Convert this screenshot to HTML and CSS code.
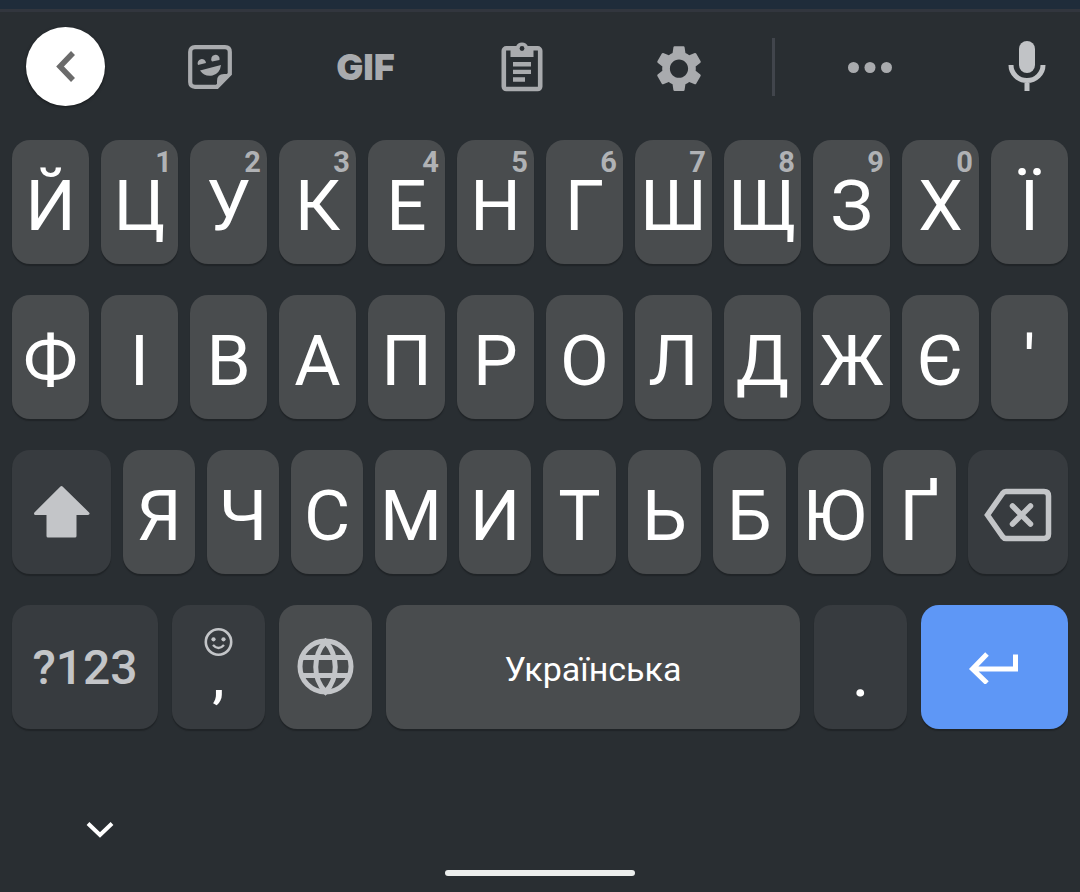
FILE: index.html
```html
<!DOCTYPE html>
<html lang="uk">
<head>
<meta charset="utf-8">
<meta name="viewport" content="width=device-width, initial-scale=1">
<title>Українська клавіатура</title>
<link rel="stylesheet" href="styles.css">
</head>
<body>
<main class="keyboard">
  <div class="toolbar">
    <button class="tool tool-back" aria-label="Назад"><span class="disc"><svg width="80" height="80" viewBox="0 0 80 80"><path d="M47 26 34 39.500 47 53" fill="none" stroke="#6b6b6b" stroke-width="5.500"/></svg></span></button>
    <button class="tool" aria-label="Стікери"><svg width="44" height="44" viewBox="0 0 44 44"><path d="M7 2.200H37Q41.800 2.200 41.800 7V29L29 41.800H7Q2.200 41.800 2.200 37V7Q2.200 2.200 7 2.200Z" fill="none" stroke="#a9abae" stroke-width="4.200"/><path d="M42.500 29 29 42.500V36Q29 29 36 29Z" fill="#a9abae"/><path d="M10 20a4.200 4.200 0 1 1 8-2ZM24 16.500a4.200 4.200 0 1 1 7.500-1.500ZM12 25.500 33 20Q32 28.500 24.500 30.500 16.500 32 12 25.500Z" fill="#a9abae"/></svg></button>
    <button class="tool gif">GIF</button>
    <button class="tool" aria-label="Буфер обміну"><svg width="42" height="50" viewBox="0 0 42 50"><rect x="2.800" y="6.300" width="36.400" height="40.700" rx="2.500" fill="none" stroke="#a9abae" stroke-width="4.600"/><path d="M9.500 4.500H15a6.500 6.500 0 0 1 12 0H32.500V15H9.500Z" fill="#a9abae"/><circle cx="21" cy="6.500" r="2.400" fill="#292e32"/><path d="M12 20H30V24.500H12ZM12 27.700H30V32H12ZM12 35.200H24V39.700H12Z" fill="#a9abae"/></svg></button>
    <button class="tool" aria-label="Налаштування"><svg width="56" height="56" viewBox="0 0 24 24"><path transform="translate(0 .7)" fill="#a9abae" d="M19.140 12.940c.040-.300.060-.610.060-.940 0-.320-.020-.640-.070-.940l2.030-1.580c.180-.140.230-.410.120-.610l-1.920-3.320c-.120-.220-.370-.290-.590-.220l-2.390.960c-.500-.380-1.030-.700-1.620-.940l-.360-2.540c-.040-.240-.240-.410-.480-.410h-3.840c-.240 0-.430.170-.470.410l-.360 2.540c-.590.240-1.130.570-1.620.940l-2.390-.960c-.220-.080-.470 0-.590.220L2.740 8.870c-.120.210-.080.470.120.610l2.030 1.580c-.050.300-.090.630-.090.940s.020.640.070.940l-2.030 1.580c-.180.140-.230.410-.120.610l1.920 3.320c.120.220.370.290.590.220l2.390-.960c.500.380 1.030.700 1.620.940l.360 2.540c.050.240.240.410.480.410h3.840c.240 0 .440-.170.470-.410l.360-2.540c.590-.240 1.130-.560 1.620-.940l2.390.960c.220.080.470 0 .590-.220l1.920-3.320c.120-.220.070-.470-.120-.610l-2.010-1.580zM12 15.900c-2.150 0-3.900-1.750-3.900-3.900s1.750-3.900 3.900-3.900 3.900 1.750 3.900 3.900-1.750 3.900-3.900 3.900z"/></svg></button>
    <span class="divider"></span>
    <button class="tool" aria-label="Більше"><svg width="46" height="12" viewBox="0 0 46 12"><g fill="#a9abae"><circle cx="6.500" cy="6.500" r="5.500"/><circle cx="23" cy="6.500" r="5.500"/><circle cx="39.500" cy="6.500" r="5.500"/></g></svg></button>
    <button class="tool tool-mic" aria-label="Голосовий ввід"><svg width="38" height="52" viewBox="0 0 38 52"><rect x="11" y="0" width="16" height="32" rx="8" fill="#c1c3c6"/><path d="M3 24a16 15.500 0 0 0 32 0M19 39V50" fill="none" stroke="#c1c3c6" stroke-width="5"/></svg></button>
  </div>

  <div class="keys">
    <div class="row row-letters">
      <button class="key">Й</button>
      <button class="key">Ц<span class="hint">1</span></button>
      <button class="key">У<span class="hint">2</span></button>
      <button class="key">К<span class="hint">3</span></button>
      <button class="key">Е<span class="hint">4</span></button>
      <button class="key">Н<span class="hint">5</span></button>
      <button class="key">Г<span class="hint">6</span></button>
      <button class="key">Ш<span class="hint">7</span></button>
      <button class="key">Щ<span class="hint">8</span></button>
      <button class="key">З<span class="hint">9</span></button>
      <button class="key">Х<span class="hint">0</span></button>
      <button class="key">Ї</button>
    </div>
    <div class="row row-letters">
      <button class="key">Ф</button>
      <button class="key">І</button>
      <button class="key">В</button>
      <button class="key">А</button>
      <button class="key">П</button>
      <button class="key">Р</button>
      <button class="key">О</button>
      <button class="key">Л</button>
      <button class="key">Д</button>
      <button class="key">Ж</button>
      <button class="key">Є</button>
      <button class="key">'</button>
    </div>
    <div class="row row-shift">
      <button class="key key-dark key-icon" aria-label="Shift"><svg width="58" height="54" viewBox="0 0 58 54"><path d="M28.500 2.500 55 28.500H42V51H15V28.500H2.500Z" fill="#c3c5c8" stroke="#c3c5c8" stroke-width="3" stroke-linejoin="round"/></svg></button>
      <button class="key">Я</button>
      <button class="key">Ч</button>
      <button class="key">С</button>
      <button class="key">М</button>
      <button class="key">И</button>
      <button class="key">Т</button>
      <button class="key">Ь</button>
      <button class="key">Б</button>
      <button class="key">Ю</button>
      <button class="key">Ґ</button>
      <button class="key key-dark" aria-label="Видалити"><svg width="68" height="54" viewBox="0 0 68 54"><path d="M22 3.500H60Q64.500 3.500 64.500 8V46Q64.500 50.500 60 50.500H22Q20 50.500 18.500 48.500L3.500 27 18.500 5.500Q20 3.500 22 3.500Z" fill="none" stroke="#c3c5c8" stroke-width="5.500"/><path d="M28.500 18 46.500 36M46.500 18 28.500 36" stroke="#c3c5c8" stroke-width="5.500" stroke-linecap="round"/></svg></button>
    </div>
    <div class="row row-space">
      <button class="key key-dark key-symbols">?123</button>
      <button class="key key-dark key-punct" aria-label="Кома, емодзі"><svg class="emoji" width="30" height="30" viewBox="0 0 30 30"><circle cx="14.500" cy="15" r="12.700" fill="none" stroke="#c3c5c8" stroke-width="2.600"/><circle cx="9.500" cy="12.300" r="2.100" fill="#c3c5c8"/><circle cx="19.500" cy="12.300" r="2.100" fill="#c3c5c8"/><path d="M9 18q5.500 6 11 0" fill="none" stroke="#c3c5c8" stroke-width="2.400"/></svg>,</button>
      <button class="key key-icon" aria-label="Мова"><svg width="58" height="58" viewBox="0 0 58 58"><g fill="none" stroke="#c3c5c8" stroke-width="5"><circle cx="28.500" cy="28.500" r="25.500"/><path d="M5 19.500H52M5 37.500H52M28.500 3.500C15.500 18 15.500 40 28.500 54C41.500 40 41.500 18 28.500 3.500Z"/></g></svg></button>
      <button class="key key-space">Українська</button>
      <button class="key key-dark key-punct">.</button>
      <button class="key key-enter key-icon" aria-label="Ввід"><svg width="54" height="34" viewBox="0 0 54 34"><path d="M47.500 4.500V19H5M19 4 4.500 19 19 33" fill="none" stroke="#fff" stroke-width="5"/></svg></button>
    </div>
  </div>

  <div class="navbar">
    <button class="hide" aria-label="Сховати клавіатуру"><svg width="28" height="18" viewBox="0 0 28 18"><path d="M2 2.500 14 14 26 2.500" fill="none" stroke="#fff" stroke-width="4"/></svg></button>
    <span class="home"></span>
  </div>
</main>
</body>
</html>
```
FILE: styles.css
```css
* {
  box-sizing: border-box;
}

body {
  margin: 0;
  background: #292e32;
  color: #fff;
  font-family: Roboto, "Noto Sans", sans-serif;
}

button {
  margin: 0;
  padding: 0;
  border: 0;
  background: none;
  color: inherit;
  font: inherit;
  cursor: pointer;
}

svg {
  display: block;
}

.keyboard {
  display: flex;
  flex-direction: column;
  min-height: 100vh;
  border-top: 9px solid #1f2c3a;
}

.toolbar {
  display: grid;
  grid-template-columns: 131fr 157fr 155fr 158fr 156fr 33fr 160fr 130fr;
  align-items: center;
  height: 116px;
  padding-bottom: 4px;
  border-top: 3px solid #32363e;
}

.tool {
  display: flex;
  align-items: center;
  justify-content: center;
  height: 100%;
}

.tool-back {
  justify-content: flex-start;
  padding-left: 26px;
}

.disc {
  width: 79px;
  height: 79px;
  border-radius: 50%;
  background: #fff;
  box-shadow: 0 1px 3px rgba(0, 0, 0, 0.5);
}

.tool-mic {
  justify-content: flex-end;
  padding-right: 34px;
}

.gif {
  color: #a9abae;
  font-family: Inter, Roboto, sans-serif;
  font-size: 36px;
  font-weight: 900;
}

.divider {
  justify-self: center;
  width: 3px;
  height: 58px;
  background: #41454c;
}

.keys {
  display: flex;
  flex-direction: column;
  gap: 31px;
  padding: 15px 12px 0;
}

.row {
  display: grid;
  gap: 12px;
}

.row-letters {
  grid-template-columns: repeat(12, minmax(0, 1fr));
}

.row-shift {
  grid-template-columns: 99fr repeat(5, minmax(0, 72fr)) repeat(5, minmax(0, 73fr)) 100fr;
}

.row-space {
  grid-template-columns: 146fr 93fr 93fr 414fr 93fr 147fr;
  gap: 14px;
}

.key {
  position: relative;
  display: flex;
  align-items: center;
  justify-content: center;
  height: 124px;
  padding-top: 6px;
  border-radius: 18px;
  background: #494c4e;
  box-shadow: 0 2px 1px #202427;
  font-size: 71px;
  line-height: 1;
}

.key-dark {
  background: #373b3f;
}

.key-enter {
  background: #5e97f6;
}

.key-icon {
  padding-top: 0;
}

.hint {
  position: absolute;
  top: 8px;
  right: 6px;
  color: #b0b2b5;
  font-size: 29px;
  font-weight: 700;
}

.key-symbols {
  padding-top: 2px;
  color: #c3c5c8;
  font-size: 48px;
  font-weight: 500;
}

.key-space {
  padding-top: 4px;
  font-size: 34px;
}

.key-punct {
  align-items: flex-end;
  padding-bottom: 24px;
  font-size: 56px;
  font-weight: 500;
}

.emoji {
  position: absolute;
  top: 22px;
  left: calc(50% - 15px);
}

.navbar {
  display: flex;
  flex: 1;
  flex-direction: column;
  justify-content: flex-end;
  padding-top: 80px;
}

.hide {
  align-self: flex-start;
  padding: 12px 24px;
  margin-left: 62px;
}

.home {
  align-self: center;
  width: 190px;
  height: 6px;
  margin: 19px 0 16px;
  border-radius: 3px;
  background: #eceeed;
}
```
